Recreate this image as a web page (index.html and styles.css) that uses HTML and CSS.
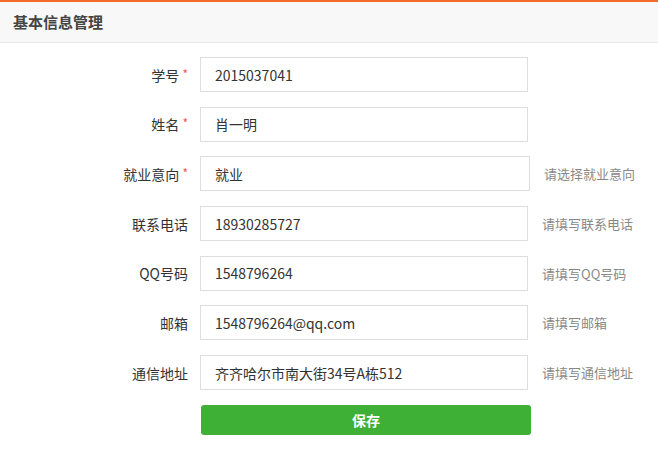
FILE: index.html
```html
<!DOCTYPE html>
<html lang="zh-CN">
<head>
  <meta charset="UTF-8">
  <meta name="viewport" content="width=device-width, initial-scale=1.0">
  <title>基本信息管理</title>
  <link rel="stylesheet" href="styles.css">
</head>
<body>
  <div class="panel">
    <div class="panel-head">基本信息管理</div>

    <form class="info-form">
      <div class="form-row">
        <label class="form-label">学号 <span class="req">*</span></label>
        <input class="form-input" type="text" value="2015037041">
      </div>
      <div class="form-row">
        <label class="form-label">姓名 <span class="req">*</span></label>
        <input class="form-input" type="text" value="肖一明">
      </div>
      <div class="form-row">
        <label class="form-label">就业意向 <span class="req">*</span></label>
        <input class="form-input wide" type="text" value="就业">
        <span class="form-tip">请选择就业意向</span>
      </div>
      <div class="form-row">
        <label class="form-label">联系电话</label>
        <input class="form-input" type="text" value="18930285727">
        <span class="form-tip">请填写联系电话</span>
      </div>
      <div class="form-row">
        <label class="form-label">QQ号码</label>
        <input class="form-input" type="text" value="1548796264">
        <span class="form-tip">请填写QQ号码</span>
      </div>
      <div class="form-row">
        <label class="form-label">邮箱</label>
        <input class="form-input" type="text" value="1548796264@qq.com">
        <span class="form-tip">请填写邮箱</span>
      </div>
      <div class="form-row">
        <label class="form-label">通信地址</label>
        <input class="form-input" type="text" value="齐齐哈尔市南大街34号A栋512">
        <span class="form-tip">请填写通信地址</span>
      </div>
      <div class="form-row btn-row">
        <span class="form-label"></span>
        <button class="btn-save" type="button">保存</button>
      </div>
    </form>
  </div>
</body>
</html>
```

FILE: styles.css
```css
body {
  margin: 0;
  font-family: "Noto Sans CJK SC", "Noto Sans", sans-serif;
  font-size: 14px;
  color: #333;
  background-color: #fff;
}
.panel {
  border-top: 2px solid #f26b2b;
}
.panel-head {
  height: 40px;
  line-height: 40px;
  padding-left: 13px;
  font-size: 15px;
  font-weight: bold;
  color: #444;
  background-color: #f8f8f8;
  border-bottom: 1px solid #e8e8e8;
}
.info-form {
  padding-top: 14px;
}
.form-row {
  display: flex;
  align-items: center;
  height: 35px;
  margin-bottom: 14.7px;
}
.form-label {
  width: 188px;
  padding-right: 12px;
  text-align: right;
  flex-shrink: 0;
  color: #333;
}
.req {
  color: #f0575b;
  font-size: 12px;
  vertical-align: 2px;
}
.form-input {
  box-sizing: border-box;
  width: 328px;
  height: 35px;
  padding: 0 14px;
  border: 1px solid #dedede;
  font-family: inherit;
  font-size: 14px;
  color: #333;
  outline: none;
}
.form-input.wide {
  width: 330px;
}
.form-tip {
  margin-left: 14px;
  color: #888;
  font-size: 13px;
}
.btn-row {
  height: 30px;
}
.btn-save {
  width: 330px;
  height: 30px;
  margin-left: 1px;
  border: none;
  border-radius: 3px;
  background-color: #3db035;
  color: #fff;
  font-family: inherit;
  font-size: 14px;
  font-weight: bold;
  cursor: pointer;
}
.btn-save:hover {
  background-color: #35a02e;
}
```
